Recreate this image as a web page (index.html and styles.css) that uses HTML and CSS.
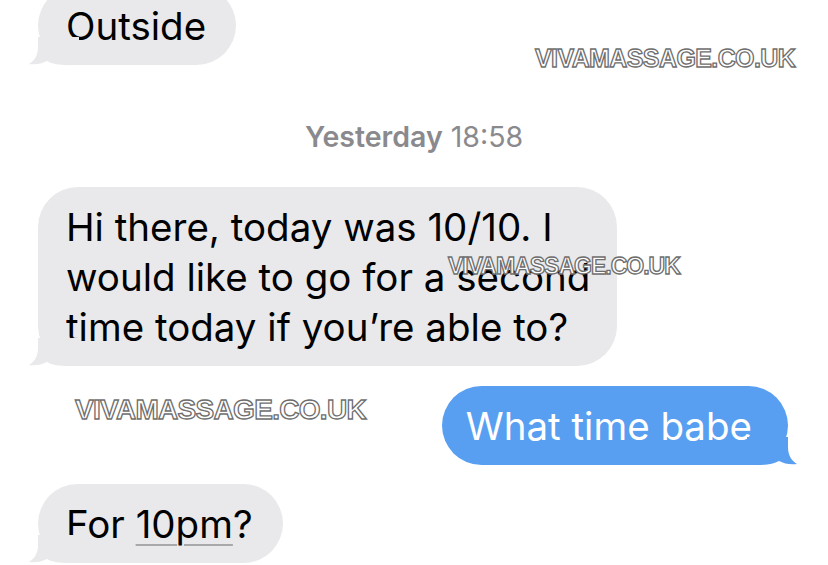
FILE: index.html
```html
<!DOCTYPE html>
<html lang="en">
<head>
<meta charset="utf-8">
<title>Messages</title>
<link rel="stylesheet" href="styles.css">
</head>
<body>
<main class="chat">
  <div class="bubble in first">Outside
    <svg class="tail" width="50" height="28" viewBox="0 0 50 28"><path d="M9 0 L9 10 C9 19 5 24 0 27 C7 28 13 26.5 18 24 C23 27 30 28 40 28 L50 28 L50 0 Z"/></svg>
  </div>

  <div class="stamp"><strong>Yesterday</strong> 18:58</div>

  <div class="bubble in long">Hi there, today was 10/10. I would like to go for a second time today if you’re able to?
    <svg class="tail" width="50" height="28" viewBox="0 0 50 28"><path d="M9 0 L9 10 C9 19 5 24 0 27 C7 28 13 26.5 18 24 C23 27 30 28 40 28 L50 28 L50 0 Z"/></svg>
  </div>

  <div class="bubble out">What time babe
    <svg class="tail" width="50" height="28" viewBox="0 0 50 28"><path d="M9 0 L9 10 C9 19 5 24 0 27 C7 28 13 26.5 18 24 C23 27 30 28 40 28 L50 28 L50 0 Z"/></svg>
  </div>

  <div class="bubble in">For <span class="detect">10pm</span>?
    <svg class="tail" width="50" height="28" viewBox="0 0 50 28"><path d="M9 0 L9 10 C9 19 5 24 0 27 C7 28 13 26.5 18 24 C23 27 30 28 40 28 L50 28 L50 0 Z"/></svg>
  </div>

  <span class="mark mark-top">VIVAMASSAGE.CO.UK</span>
  <span class="mark mark-mid">VIVAMASSAGE.CO.UK</span>
  <span class="mark mark-left">VIVAMASSAGE.CO.UK</span>
</main>
</body>
</html>
```
FILE: styles.css
```css
* { box-sizing: border-box; }

html, body {
  margin: 0;
  padding: 0;
  background: #ffffff;
}

.chat {
  position: relative;
  width: 828px;
  height: 565px;
  overflow: hidden;
  display: flex;
  flex-direction: column;
  align-items: flex-start;
  font-family: Inter, "Noto Sans", "Liberation Sans", sans-serif;
}

.bubble {
  position: relative;
  font-size: 38.5px;
  line-height: 50px;
  letter-spacing: 0;
  padding: 14.5px 30px 14.5px 28px;
  border-radius: 40px;
  background: #e9e9eb;
  color: #000000;
}

.bubble .tail {
  position: absolute;
  bottom: 0;
  left: -9px;
  fill: #e9e9eb;
}

.bubble.in { margin-left: 38px; }

.first { margin-top: -14px; }

.long {
  max-width: 579px;
  margin-top: 33px;
  padding-right: 26px;
}

.out {
  align-self: flex-end;
  margin-right: 40px;
  margin-top: 20px;
  background: #589ff1;
  color: #ffffff;
  padding-left: 24px;
  padding-right: 36px;
}

.out .tail {
  left: auto;
  right: -9px;
  transform: scaleX(-1);
  fill: #589ff1;
}

.out + .bubble { margin-top: 19px; }

.detect {
  text-decoration: underline;
  text-decoration-color: #a8a8ab;
  text-decoration-thickness: 2px;
  text-underline-offset: 6px;
  text-decoration-skip-ink: auto;
}

.stamp {
  align-self: center;
  margin-top: 55px;
  font-size: 28.5px;
  line-height: 34px;
  color: #8a8a8e;
  font-weight: 400;
}

.stamp strong { font-weight: 600; }

.mark {
  position: absolute;
  font-family: "Liberation Sans", Arial, sans-serif;
  font-weight: 700;
  color: #ffffff;
  -webkit-text-stroke: 1.3px #6e6e6e;
  white-space: nowrap;
  line-height: 1;
  pointer-events: none;
}

.mark-top {
  top: 46px;
  left: 535px;
  font-size: 25px;
  letter-spacing: -0.6px;
}

.mark-mid {
  top: 255px;
  left: 448px;
  font-size: 23px;
  letter-spacing: -1px;
}

.mark-left {
  top: 396px;
  left: 75px;
  font-size: 28px;
  letter-spacing: -0.7px;
}
```
